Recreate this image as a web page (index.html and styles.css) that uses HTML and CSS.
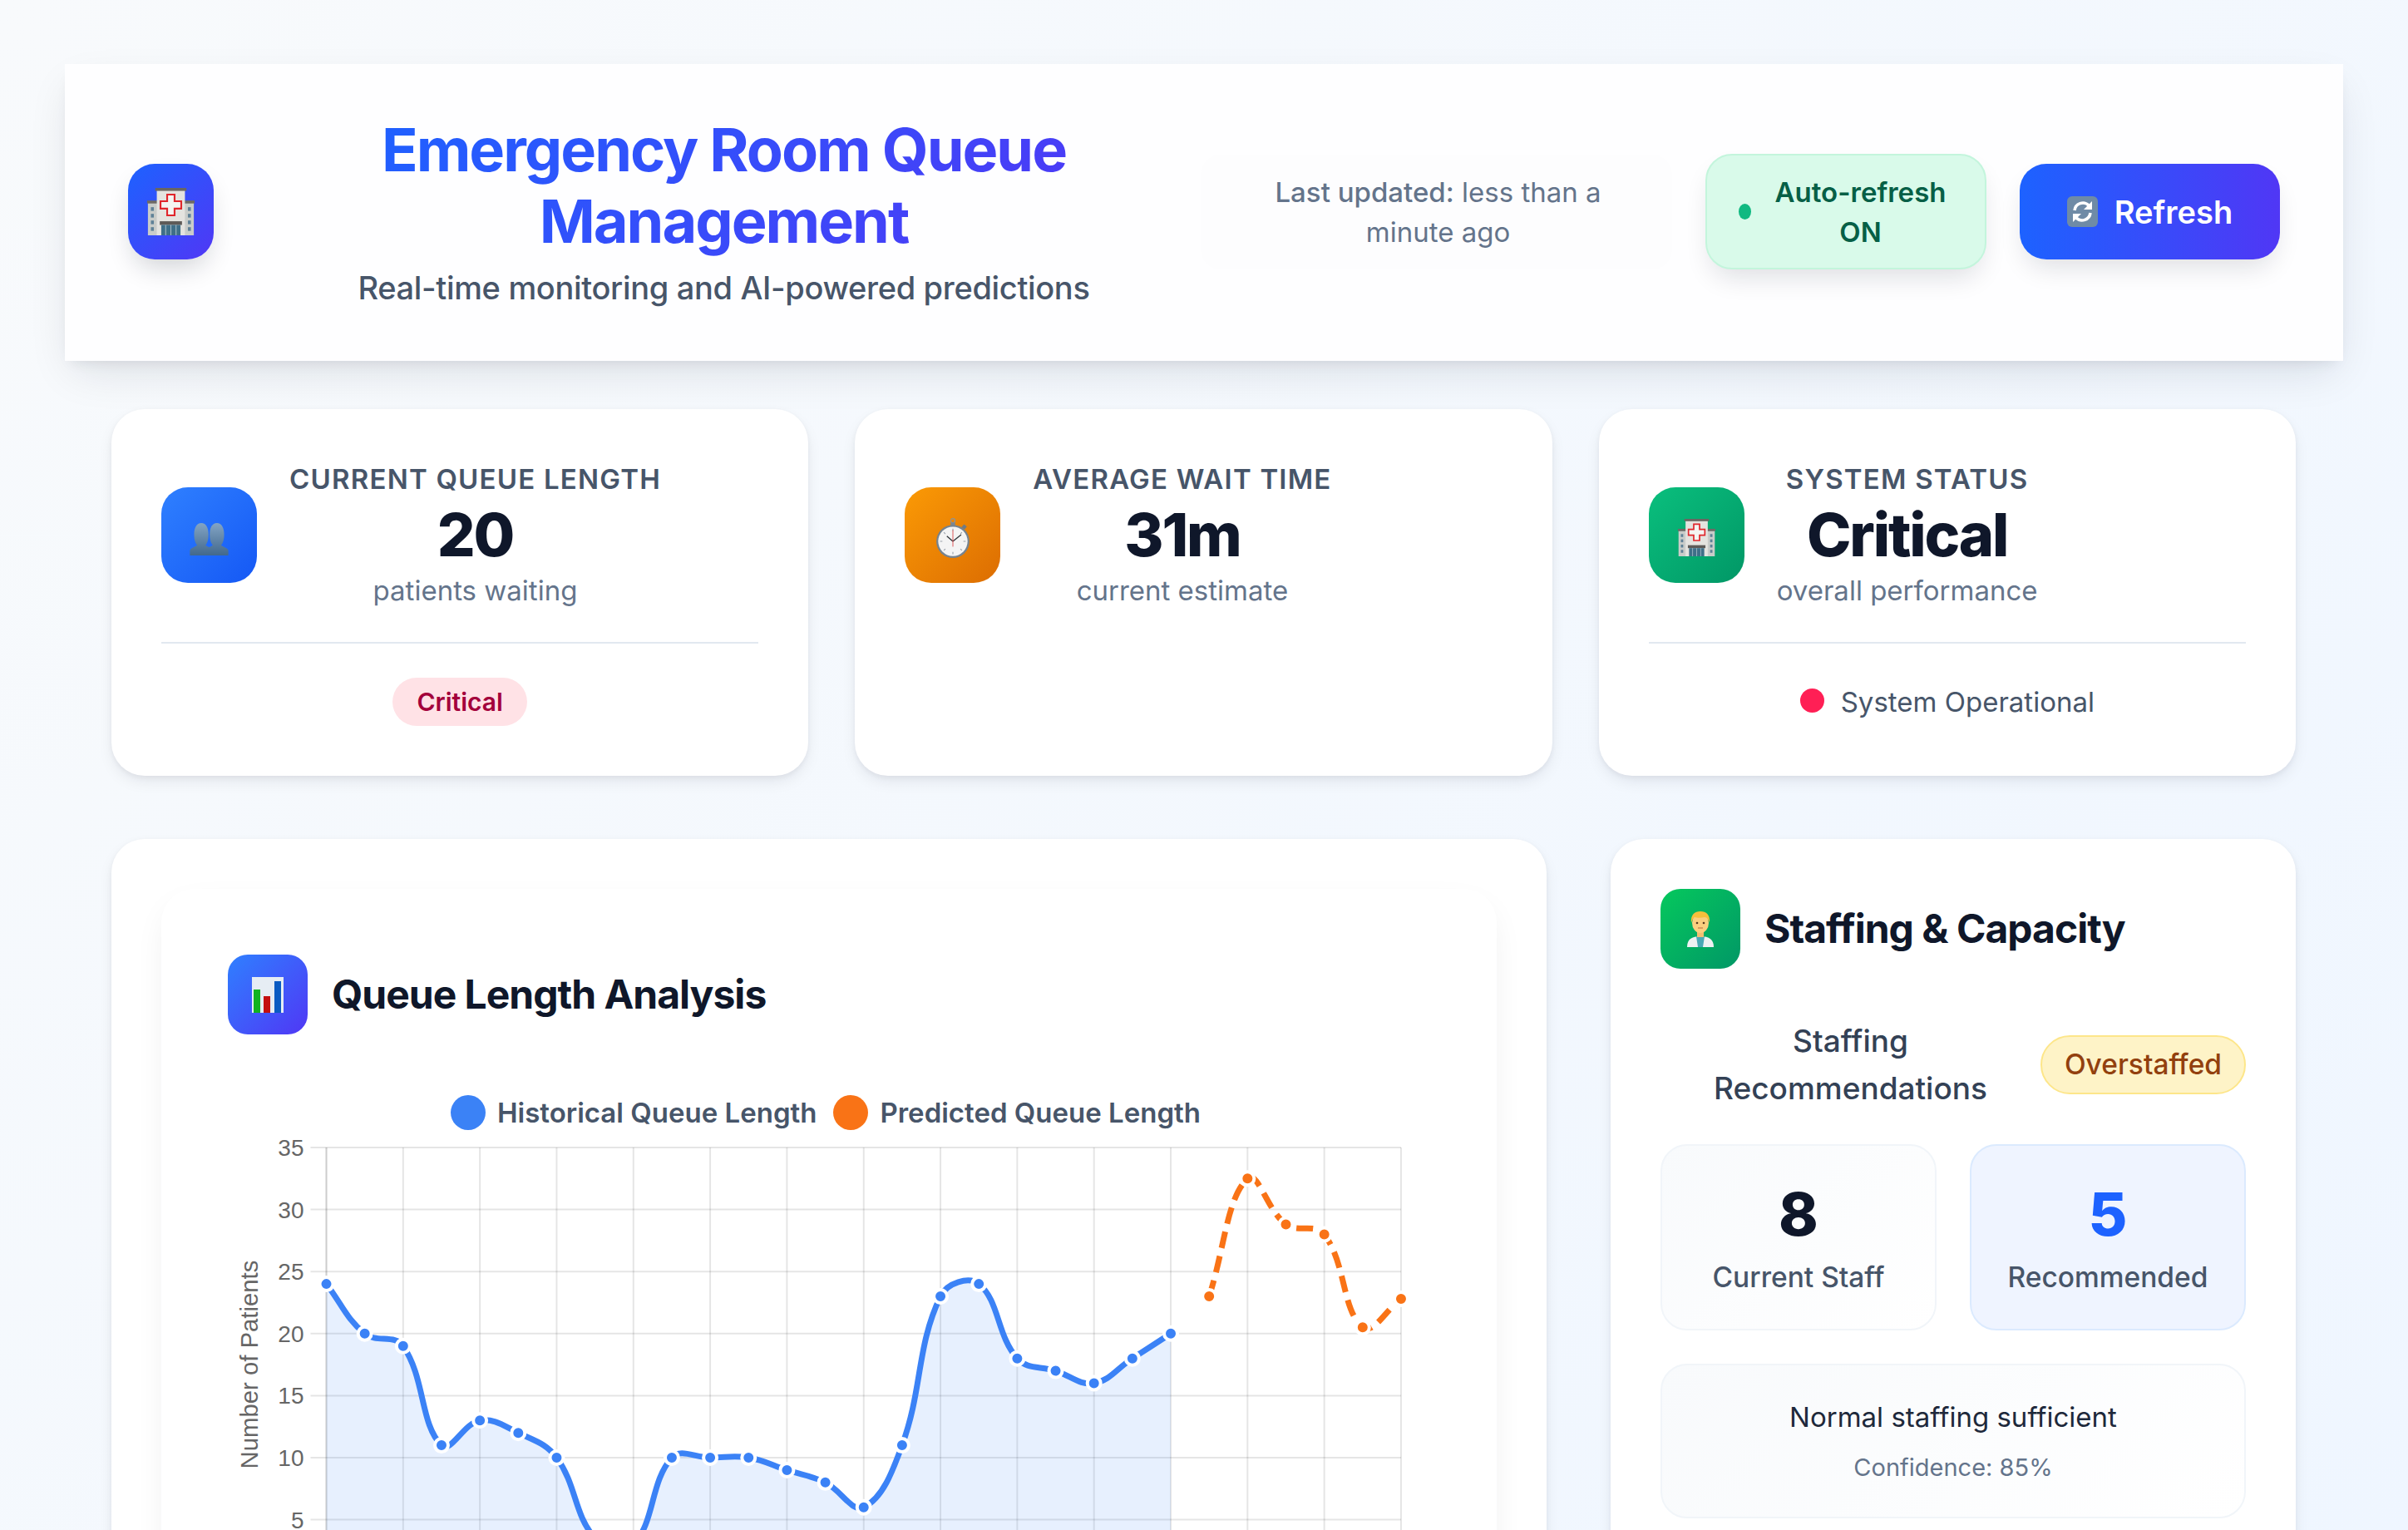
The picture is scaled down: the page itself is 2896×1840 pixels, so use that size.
FILE: index.html
```html
<!DOCTYPE html>
<html lang="en">
<head>
    <meta charset="UTF-8">
    <meta name="viewport" content="width=device-width, initial-scale=1.0">
    <title>Emergency Room Queue Management</title>
    <link rel="stylesheet" href="styles.css">
</head>
<body>
    <!-- emoji drawings, reused below -->
    <svg class="sprites" width="0" height="0">
        <defs>
            <linearGradient id="bustFill" x1="0" y1="0" x2="0" y2="1">
                <stop offset="0" stop-color="#83a4c4"/>
                <stop offset="1" stop-color="#42688c"/>
            </linearGradient>
            <symbol id="hospital" viewBox="0 0 64 64">
                <rect x="1" y="20" width="14" height="44" fill="#c9ccc9"/>
                <rect x="49" y="20" width="14" height="44" fill="#c9ccc9"/>
                <rect x="0" y="17" width="16" height="4" fill="#6d6a66"/>
                <rect x="48" y="17" width="16" height="4" fill="#6d6a66"/>
                <g fill="#5f8197">
                    <rect x="5" y="26" width="4" height="5"/><rect x="5" y="35" width="4" height="5"/><rect x="5" y="44" width="4" height="5"/><rect x="5" y="53" width="4" height="5"/>
                    <rect x="55" y="26" width="4" height="5"/><rect x="55" y="35" width="4" height="5"/><rect x="55" y="44" width="4" height="5"/><rect x="55" y="53" width="4" height="5"/>
                </g>
                <rect x="13" y="3" width="38" height="61" fill="#e4e3df"/>
                <rect x="11" y="0" width="42" height="4" fill="#6a6662"/>
                <path d="M27 9h10v9h9v10h-9v9H27v-9h-9V18h9z" fill="#f4f4f2" stroke="#e0262c" stroke-width="2.4"/>
                <rect x="17" y="45" width="30" height="5" fill="#5d5a57"/>
                <rect x="19" y="50" width="26" height="14" fill="#3f6f88"/>
                <path d="M25 50v14M32 50v14M39 50v14" stroke="#b8c9d2" stroke-width="1"/>
            </symbol>
            <symbol id="busts" viewBox="0 0 64 54">
                <path d="M0 54V46c0-4 8-6 12-9-4-5-5-11-5-18C7 8 11 0 19 0s12 8 12 19c0 7-1 13-5 18 4 3 12 5 12 9v8z" fill="url(#bustFill)"/>
                <path d="M26 54V46c0-4 8-6 12-9-4-5-5-11-5-18 0-11 4-19 12-19s12 8 12 19c0 7-1 13-5 18 4 3 12 5 12 9v8z" fill="url(#bustFill)"/>
            </symbol>
            <symbol id="stopwatch" viewBox="0 0 44 53">
                <circle cx="22" cy="3.5" r="2.8" fill="none" stroke="#8b949c" stroke-width="1.4"/>
                <rect x="19" y="6" width="6" height="4" fill="#7c8790"/>
                <rect x="35" y="9" width="5" height="5" fill="#6f7a84" transform="rotate(40 37 11)"/>
                <circle cx="22" cy="31" r="22" fill="#76838f"/>
                <circle cx="22" cy="31" r="19.5" fill="#f4f4f4"/>
                <path d="M22 14v3M22 45v3M5 31h3M36 31h3M10 19l2 2M34 19l-2 2M10 43l2-2M34 43l-2-2" stroke="#9aa2a9" stroke-width="1.2"/>
                <path d="M22 31L14 24M22 31L33 22" stroke="#33383d" stroke-width="1.5"/>
                <path d="M22 16v22" stroke="#d9363a" stroke-width="0.9"/>
            </symbol>
            <symbol id="barchart" viewBox="0 0 38 43">
                <rect width="38" height="43" fill="#e6edf4"/>
                <rect x="2" y="15" width="8" height="28" fill="#12b31f"/>
                <rect x="14" y="23" width="8" height="20" fill="#c40f0f"/>
                <rect x="27" y="5" width="8" height="38" fill="#0a5bc2"/>
            </symbol>
            <symbol id="doctor" viewBox="0 0 36 44">
                <path d="M2 44c0-9 5-13 16-13s16 4 16 13z" fill="#eef1f2"/>
                <path d="M13 31h10l-2 13h-6z" fill="#49a8b5"/>
                <rect x="14" y="24" width="8" height="8" fill="#f2bf72"/>
                <ellipse cx="18" cy="15" rx="10" ry="12" fill="#fbcf7f"/>
                <path d="M7 15C6 5 11 1 18 1s12 4 11 14c-1-4-3-7-6-7-4 1-9 1-12 0-2 1-3 4-4 7z" fill="#f6bf3c"/>
                <circle cx="14" cy="15" r="1.3" fill="#5b3a1e"/>
                <circle cx="22" cy="15" r="1.3" fill="#5b3a1e"/>
                <path d="M15 21h6" stroke="#b46f3c" stroke-width="1"/>
            </symbol>
            <symbol id="arrows" viewBox="0 0 37 37">
                <rect width="37" height="37" rx="6" fill="#6f8ba6"/>
                <path d="M9 17a10 10 0 0 1 17-6" fill="none" stroke="#fff" stroke-width="3.6"/>
                <path d="M30 6v10H20z" fill="#fff"/>
                <path d="M28 20a10 10 0 0 1-17 6" fill="none" stroke="#fff" stroke-width="3.6"/>
                <path d="M7 31V21h10z" fill="#fff"/>
            </symbol>
        </defs>
    </svg>

    <div class="page">
        <header class="top-bar">
            <div class="logo"><svg class="logo-art"><use href="#hospital"/></svg></div>
            <div class="title-block">
                <h1>Emergency Room Queue Management</h1>
                <p>Real-time monitoring and AI-powered predictions</p>
            </div>
            <div class="last-updated"><span>Last updated:</span> less than a minute ago</div>
            <div class="auto-refresh">
                <span class="auto-dot"></span>
                <span class="auto-text">Auto-refresh ON</span>
            </div>
            <button class="refresh-btn"><svg class="refresh-art"><use href="#arrows"/></svg>Refresh</button>
        </header>

        <section class="stats">
            <div class="stat-card">
                <div class="stat-main">
                    <div class="stat-icon icon-blue"><svg class="art-busts"><use href="#busts"/></svg></div>
                    <div class="stat-text">
                        <div class="stat-label">CURRENT QUEUE LENGTH</div>
                        <div class="stat-value">20</div>
                        <div class="stat-sub">patients waiting</div>
                    </div>
                </div>
                <div class="stat-foot"><span class="badge-critical">Critical</span></div>
            </div>
            <div class="stat-card">
                <div class="stat-main no-foot">
                    <div class="stat-icon icon-orange"><svg class="art-watch"><use href="#stopwatch"/></svg></div>
                    <div class="stat-text">
                        <div class="stat-label">AVERAGE WAIT TIME</div>
                        <div class="stat-value">31m</div>
                        <div class="stat-sub">current estimate</div>
                    </div>
                </div>
            </div>
            <div class="stat-card">
                <div class="stat-main">
                    <div class="stat-icon icon-green"><svg class="art-hospital"><use href="#hospital"/></svg></div>
                    <div class="stat-text">
                        <div class="stat-label">SYSTEM STATUS</div>
                        <div class="stat-value">Critical</div>
                        <div class="stat-sub">overall performance</div>
                    </div>
                </div>
                <div class="stat-foot">
                    <span class="status-dot"></span>
                    <span class="status-text">System Operational</span>
                </div>
            </div>
        </section>

        <section class="main-grid">
            <div class="card">
                <div class="chart-panel">
                    <div class="section-head">
                        <div class="section-icon icon-violet"><svg class="art-bars"><use href="#barchart"/></svg></div>
                        <h2>Queue Length Analysis</h2>
                    </div>
                    <div class="legend">
                        <span class="legend-dot dot-blue"></span><span class="legend-text">Historical Queue Length</span>
                        <span class="legend-dot dot-orange"></span><span class="legend-text">Predicted Queue Length</span>
                    </div>
                    <svg id="queueChart" class="chart" width="1448" height="640" viewBox="0 0 1448 640"></svg>
                </div>
            </div>

            <div class="card side-card">
                <div class="section-head">
                    <div class="section-icon icon-emerald"><svg class="art-doctor"><use href="#doctor"/></svg></div>
                    <h2>Staffing &amp; Capacity</h2>
                </div>
                <div class="staff-row">
                    <h3>Staffing Recommendations</h3>
                    <span class="badge-over">Overstaffed</span>
                </div>
                <div class="staff-boxes">
                    <div class="staff-box">
                        <div class="staff-num">8</div>
                        <div class="staff-label">Current Staff</div>
                    </div>
                    <div class="staff-box box-rec">
                        <div class="staff-num num-rec">5</div>
                        <div class="staff-label">Recommended</div>
                    </div>
                </div>
                <div class="advice">
                    <div class="advice-text">Normal staffing sufficient</div>
                    <div class="advice-conf">Confidence: 85%</div>
                </div>
            </div>
        </section>
    </div>

    <script src="chart.js"></script>
</body>
</html>
```

FILE: styles.css
```css
* {
    box-sizing: border-box;
}
html, body {
    margin: 0;
    height: 1840px;
    overflow: hidden;
}
body {
    font-family: Inter, "Noto Sans", sans-serif;
    background: linear-gradient(135deg, #f8fafc 0%, #eff6ff 100%);
    color: #0f172a;
    text-align: center;
}
.sprites {
    position: absolute;
}
.page {
    padding: 77px 135px 0 134px;
}

/* top bar */
.top-bar {
    display: flex;
    align-items: center;
    gap: 40px;
    height: 357px;
    margin: 0 -57px 58px -56px;
    padding: 0 76px 2px;
    background: #fefeff;
    box-shadow: 0 20px 50px -10px rgba(15, 23, 42, 0.12), 0 8px 16px -8px rgba(15, 23, 42, 0.1);
}
.logo {
    flex: 0 0 103px;
    height: 115px;
    display: flex;
    align-items: center;
    justify-content: center;
    border-radius: 32px;
    background: linear-gradient(135deg, #1d62ff, #5037f5);
    box-shadow: 0 16px 32px -8px rgba(15, 23, 42, 0.2);
}
.logo-art {
    width: 57px;
    height: 57px;
}
.title-block {
    flex: 1;
    padding: 0 0 2px 40px;
}
h1 {
    margin: 0 auto;
    width: 900px;
    font-size: 72px;
    line-height: 86.4px;
    font-weight: 700;
    letter-spacing: -0.028em;
    background: linear-gradient(135deg, #1d62ff, #5037f5);
    -webkit-background-clip: text;
    background-clip: text;
    color: transparent;
}
.title-block p {
    margin: 13px 0 0;
    font-size: 38px;
    line-height: 48px;
    font-weight: 500;
    letter-spacing: -0.33px;
    color: #475569;
}
.last-updated {
    flex: 0 0 567px;
    height: 138px;
    padding: 21px 58px 21px 62px;
    border-radius: 24px;
    background: #fdfdfe;
    font-size: 33px;
    line-height: 48px;
    color: #64748b;
}
.last-updated span {
    font-weight: 500;
}
.auto-refresh {
    flex: 0 0 338px;
    height: 139px;
    display: flex;
    align-items: center;
    gap: 20px;
    padding: 0 38px;
    border: 2px solid #c3f5dc;
    border-radius: 32px;
    background: #d9faea;
    box-shadow: 0 16px 32px -8px rgba(15, 23, 42, 0.14);
}
.auto-dot {
    flex: 0 0 15px;
    height: 19px;
    border-radius: 50%;
    background: #10b981;
}
.auto-text {
    flex: 1;
    font-size: 33px;
    line-height: 48px;
    font-weight: 600;
    color: #065f46;
}
.refresh-btn {
    flex: 0 0 313px;
    height: 115px;
    display: flex;
    align-items: center;
    justify-content: center;
    gap: 20px;
    padding: 0;
    border: none;
    border-radius: 32px;
    background: linear-gradient(90deg, #1d62ff, #5037f5);
    box-shadow: 0 16px 32px -8px rgba(15, 23, 42, 0.14);
    font-family: inherit;
    font-size: 38px;
    font-weight: 600;
    color: #fff;
}
.refresh-art {
    width: 37px;
    height: 37px;
}

/* stat cards */
.stats {
    display: grid;
    grid-template-columns: repeat(3, 1fr);
    gap: 56px;
    margin-bottom: 76px;
}
.stat-card {
    padding: 60px;
    border-radius: 40px;
    background: #fff;
    box-shadow: 0 8px 20px -4px rgba(15, 23, 42, 0.1), 0 2px 6px rgba(15, 23, 42, 0.05);
}
.stat-main {
    display: flex;
    align-items: center;
    gap: 39px;
    padding-bottom: 38px;
    border-bottom: 2px solid #e2e8f0;
}
.stat-main.no-foot {
    border-bottom: none;
}
.stat-icon {
    flex: 0 0 115px;
    height: 115px;
    display: flex;
    align-items: center;
    justify-content: center;
    border-radius: 32px;
}
.icon-blue {
    background: linear-gradient(135deg, #2f80ff, #1558f5);
}
.icon-orange {
    background: linear-gradient(135deg, #fb9a05, #dc6d02);
}
.icon-green {
    background: linear-gradient(135deg, #0abf7d, #019766);
}
.icon-violet {
    background: linear-gradient(135deg, #2f80ff, #5037f5);
}
.icon-emerald {
    background: linear-gradient(135deg, #05c85d, #019766);
}
.art-busts {
    width: 47px;
    height: 39px;
    margin-top: 10px;
}
.art-watch {
    width: 40px;
    height: 48px;
    margin-top: 8px;
}
.art-hospital {
    width: 45px;
    height: 47px;
    margin-top: 6px;
}
.stat-label {
    font-size: 33px;
    line-height: 48px;
    font-weight: 600;
    letter-spacing: 1.2px;
    color: #475569;
    white-space: nowrap;
}
.stat-value {
    font-size: 72px;
    line-height: 86px;
    font-weight: 800;
    letter-spacing: -0.03em;
    color: #0f172a;
}
.stat-sub {
    font-size: 33px;
    line-height: 48px;
    color: #64748b;
    white-space: nowrap;
}
.stat-foot {
    display: flex;
    align-items: center;
    justify-content: center;
    gap: 20px;
    height: 58px;
    margin-top: 41px;
}
.badge-critical {
    height: 58px;
    padding: 0 29px;
    border-radius: 29px;
    background: #ffe2e6;
    font-size: 30px;
    line-height: 58px;
    font-weight: 600;
    color: #a3003b;
}
.status-dot {
    width: 29px;
    height: 29px;
    margin-top: -3px;
    border-radius: 50%;
    background: #ff1f55;
}
.status-text {
    font-size: 33px;
    color: #475569;
}

/* lower section */
.main-grid {
    display: grid;
    grid-template-columns: 1726px 824px;
    gap: 77px;
    align-items: start;
}
.card {
    padding: 60px;
    border-radius: 40px;
    background: #fff;
    box-shadow: 0 8px 20px -4px rgba(15, 23, 42, 0.1), 0 2px 6px rgba(15, 23, 42, 0.05);
}
.chart-panel {
    padding: 79px 80px 80px;
    border-radius: 40px;
    background: #fff;
    box-shadow: 0 16px 40px -8px rgba(15, 23, 42, 0.08);
}
.section-head {
    display: flex;
    align-items: center;
    gap: 29px;
}
.section-icon {
    flex: 0 0 96px;
    height: 96px;
    display: flex;
    align-items: center;
    justify-content: center;
    border-radius: 24px;
}
.art-bars {
    width: 38px;
    height: 43px;
}
.art-doctor {
    width: 36px;
    height: 44px;
}
h2 {
    margin: 0;
    font-size: 48px;
    line-height: 64px;
    font-weight: 700;
    letter-spacing: -1px;
    color: #0f172a;
}
.legend {
    display: flex;
    align-items: center;
    justify-content: center;
    height: 44px;
    margin-top: 72px;
    padding-right: 8px;
}
.legend-dot {
    width: 42px;
    height: 42px;
    border-radius: 50%;
}
.dot-blue {
    background: #3b82f6;
}
.dot-orange {
    margin-left: 20px;
    background: #f97316;
}
.legend-text {
    margin-left: 14px;
    font-size: 33px;
    font-weight: 600;
    color: #475569;
}
.chart {
    display: block;
    font-family: "Liberation Sans", Arial, sans-serif;
}
.grid-line {
    stroke: rgba(0, 0, 0, 0.1);
    stroke-width: 2;
}
.tick {
    font-size: 28px;
    fill: #666;
}
.axis-title {
    font-size: 29.3px;
    fill: #666;
}
.area {
    fill: rgba(59, 130, 246, 0.12);
}
.line {
    fill: none;
    stroke-width: 7;
}
.line-hist {
    stroke: #3b82f6;
}
.line-pred {
    stroke: #f97316;
    stroke-dasharray: 20 10;
}
.pt {
    stroke: #fff;
    stroke-width: 4;
}
.pt-hist {
    fill: #3b82f6;
}
.pt-pred {
    fill: #f97316;
}

/* staffing */
.staff-row {
    display: flex;
    align-items: center;
    margin-top: 58px;
}
h3 {
    flex: 1;
    margin: 0;
    padding: 0 40px;
    font-size: 37px;
    line-height: 57px;
    font-weight: 500;
    color: #334155;
}
.badge-over {
    flex: 0 0 247px;
    height: 71px;
    border: 2px solid #fde68a;
    border-radius: 36px;
    background: #fef3c7;
    font-size: 33.5px;
    line-height: 67px;
    font-weight: 500;
    color: #92400e;
}
.staff-boxes {
    display: grid;
    grid-template-columns: 1fr 1fr;
    gap: 40px;
    margin-top: 39px;
}
.staff-box {
    padding: 39px 0 38px;
    border: 2px solid #f1f5f9;
    border-radius: 32px;
    background: linear-gradient(135deg, #f8fafc, #fff);
}
.box-rec {
    border-color: #dbeafe;
    background: #eff4ff;
}
.staff-num {
    font-size: 72px;
    line-height: 86px;
    font-weight: 800;
    color: #0f172a;
}
.num-rec {
    color: #1d62ff;
}
.staff-label {
    margin-top: 9px;
    font-size: 33.5px;
    line-height: 48px;
    font-weight: 500;
    color: #475569;
}
.advice {
    margin-top: 40px;
    padding: 38px 0;
    border: 2px solid #f1f5f9;
    border-radius: 32px;
    background: linear-gradient(135deg, #f8fafc, #fff);
}
.advice-text {
    font-size: 33px;
    line-height: 48px;
    font-weight: 400;
    color: #1e293b;
}
.advice-conf {
    margin-top: 16px;
    font-size: 29px;
    line-height: 42px;
    color: #64748b;
}
```

FILE: chart.js
```js
// draws the queue chart into the svg, spline maths same as chart.js tension 0.4
const history = [24, 20, 19, 11, 13, 12, 10, 3.5, 3, 10, 10, 10, 9, 8, 6, 11, 23, 24, 18, 17, 16, 18, 20];
const predicted = [23, 32.5, 28.8, 28, 20.5, 22.8];

const svg = document.getElementById('queueChart');
const originX = 118.5;   // x of first point inside the svg
const stepX = 46.16;
const topY = 20;         // y of the 35 line
const perUnit = 14.92;
const tension = 0.4;

const xAt = i => originX + i * stepX;
const yAt = v => topY + (35 - v) * perUnit;

function add(tag, attrs, text) {
    const el = document.createElementNS('http://www.w3.org/2000/svg', tag);
    for (const key in attrs) el.setAttribute(key, attrs[key]);
    if (text) el.textContent = text;
    svg.appendChild(el);
    return el;
}

function splinePath(points) {
    let d = `M${points[0].x} ${points[0].y}`;
    const ctrl = points.map((p, i) => {
        const prev = points[i - 1] || p;
        const next = points[i + 1] || p;
        const d1 = Math.hypot(p.x - prev.x, p.y - prev.y);
        const d2 = Math.hypot(next.x - p.x, next.y - p.y);
        const s1 = d1 / (d1 + d2) * tension;
        const s2 = d2 / (d1 + d2) * tension;
        return {
            inX: p.x - s1 * (next.x - prev.x),
            inY: p.y - s1 * (next.y - prev.y),
            outX: p.x + s2 * (next.x - prev.x),
            outY: p.y + s2 * (next.y - prev.y)
        };
    });
    for (let i = 1; i < points.length; i++) {
        d += `C${ctrl[i - 1].outX} ${ctrl[i - 1].outY} ${ctrl[i].inX} ${ctrl[i].inY} ${points[i].x} ${points[i].y}`;
    }
    return d;
}

// grid
const bottom = yAt(0);
const right = xAt(28);
for (let v = 0; v <= 35; v += 5) {
    add('line', { class: 'grid-line', x1: originX - 19, x2: right, y1: yAt(v), y2: yAt(v) });
    add('text', { class: 'tick', x: originX - 27, y: yAt(v) + 10, 'text-anchor': 'end' }, String(v));
}
for (let i = 0; i <= 28; i += 2) {
    add('line', { class: 'grid-line', x1: xAt(i), x2: xAt(i), y1: topY, y2: bottom });
}
add('line', { class: 'grid-line', x1: originX, x2: originX, y1: topY, y2: bottom });
add('text', {
    class: 'axis-title',
    transform: `translate(36 ${topY + 261}) rotate(-90)`,
    'text-anchor': 'middle'
}, 'Number of Patients');

// history
const histPts = history.map((v, i) => ({ x: xAt(i), y: yAt(v) }));
const histLine = splinePath(histPts);
add('path', { class: 'area', d: `${histLine}L${xAt(22)} ${bottom}L${xAt(0)} ${bottom}Z` });
add('path', { class: 'line line-hist', d: histLine });
histPts.forEach(p => add('circle', { class: 'pt pt-hist', cx: p.x, cy: p.y, r: 8 }));

// prediction
const predPts = predicted.map((v, i) => ({ x: xAt(i + 23), y: yAt(v) }));
add('path', { class: 'line line-pred', d: splinePath(predPts) });
predPts.forEach(p => add('circle', { class: 'pt pt-pred', cx: p.x, cy: p.y, r: 8 }));
```
